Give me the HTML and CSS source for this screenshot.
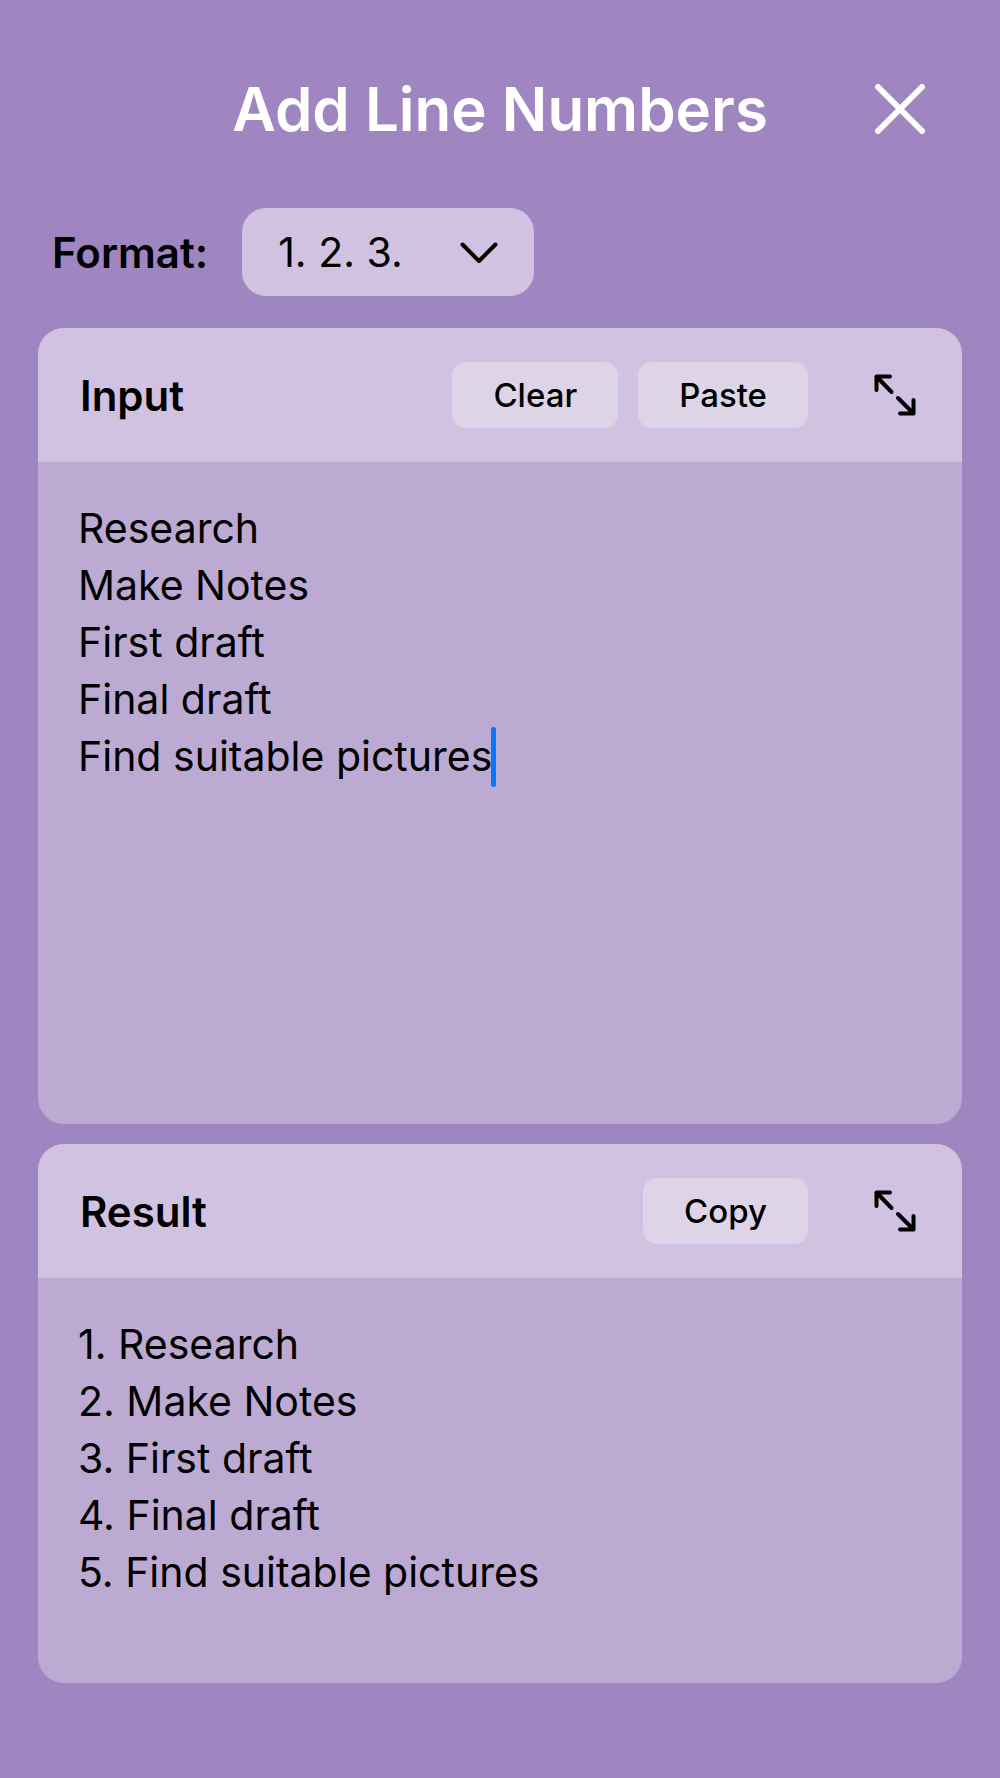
FILE: index.html
```html
<!DOCTYPE html>
<html lang="en">
<head>
<meta charset="utf-8">
<meta name="viewport" content="width=device-width, initial-scale=1">
<title>Add Line Numbers</title>
<link rel="stylesheet" href="styles.css">
</head>
<body>
<main class="page">
  <header class="topbar">
    <h1 class="title">Add Line Numbers</h1>
    <button class="icon-button" type="button" aria-label="Close">
      <svg class="close-icon" viewBox="0 0 52 52" aria-hidden="true"><path d="M4 4L48 48M48 4L4 48"/></svg>
    </button>
  </header>

  <div class="format">
    <label class="format-label" for="format">Format:</label>
    <div class="select-wrap">
      <select class="select" id="format">
        <option>1. 2. 3.</option>
      </select>
      <svg class="chevron" viewBox="0 0 38 22" aria-hidden="true"><path d="M2.500 2.500L19 19L35.500 2.500"/></svg>
    </div>
  </div>

  <section class="panel panel-input">
    <div class="panel-head">
      <h2 class="panel-title"><label for="input">Input</label></h2>
      <button class="button" type="button">Clear</button>
      <button class="button" type="button">Paste</button>
      <button class="icon-button" type="button" aria-label="Expand input">
        <svg class="expand-icon" viewBox="0 0 42 42" aria-hidden="true"><path d="M16 2.500H2.500V16M2.500 2.500L17.500 18M24 24L39.500 39.500M39.500 26V39.500H26"/></svg>
      </button>
    </div>
    <div class="editor">
      <textarea class="text" id="input" spellcheck="false">Research
Make Notes
First draft
Final draft
Find suitable pictures</textarea>
      <span class="caret"></span>
    </div>
  </section>

  <section class="panel panel-result">
    <div class="panel-head">
      <h2 class="panel-title"><label for="result">Result</label></h2>
      <button class="button" type="button">Copy</button>
      <button class="icon-button" type="button" aria-label="Expand result">
        <svg class="expand-icon" viewBox="0 0 42 42" aria-hidden="true"><path d="M16 2.500H2.500V16M2.500 2.500L17.500 18M24 24L39.500 39.500M39.500 26V39.500H26"/></svg>
      </button>
    </div>
    <div class="editor">
      <textarea class="text" id="result" rows="6" readonly spellcheck="false">1. Research
2. Make Notes
3. First draft
4. Final draft
5. Find suitable pictures</textarea>
    </div>
  </section>
</main>
</body>
</html>
```
FILE: styles.css
```css
* {
  box-sizing: border-box;
}

body {
  margin: 0;
  background: #9f86c0;
  color: #000;
  font-family: Inter, "Liberation Sans", sans-serif;
  font-size: 42px;
  line-height: 57px;
}

button,
select,
textarea {
  margin: 0;
  border: 0;
  color: inherit;
  font-family: inherit;
}

svg {
  display: block;
  fill: none;
  stroke: currentColor;
  stroke-width: 4;
  stroke-linecap: round;
  stroke-linejoin: round;
}

.page {
  display: flex;
  flex-direction: column;
  min-height: 100vh;
  padding: 69px 38px 95px;
}

.topbar {
  display: grid;
  grid-template-columns: 88px 1fr 88px;
  align-items: center;
  padding: 0 18px;
  color: #fff;
}

.title {
  grid-column: 2;
  margin: 0;
  font-size: 60px;
  font-weight: 600;
  line-height: 80px;
  text-align: center;
  white-space: nowrap;
}

.icon-button {
  display: flex;
  align-items: center;
  justify-content: center;
  width: 88px;
  height: 66px;
  padding: 0;
  background: none;
}

.close-icon {
  width: 52px;
  height: 52px;
  stroke-width: 6;
}

.expand-icon {
  width: 42px;
  height: 42px;
}

.format {
  display: flex;
  align-items: center;
  gap: 34px;
  margin: 59px 0 32px;
  padding-left: 14px;
}

.format-label,
.panel-title {
  font-weight: 600;
}

.select-wrap {
  position: relative;
}

.select {
  appearance: none;
  width: 292px;
  height: 88px;
  padding: 0 36px;
  border-radius: 24px;
  background: #d0c2e0;
  font-size: 41px;
}

.chevron {
  position: absolute;
  top: 34px;
  right: 36px;
  width: 38px;
  height: 22px;
  pointer-events: none;
}

.panel {
  display: flex;
  flex-direction: column;
  overflow: hidden;
  border-radius: 26px;
  background: #bcaad3;
}

.panel-input {
  flex: 1;
}

.panel-result {
  margin-top: 20px;
}

.panel-head {
  display: flex;
  align-items: center;
  gap: 20px;
  height: 134px;
  padding: 0 23px 0 42px;
  background: #d0c2e0;
}

.panel-head .icon-button {
  margin-left: 23px;
}

.panel-title {
  flex: 1;
  margin: 0;
  font-size: 42px;
}

.button {
  height: 66px;
  padding: 0 41px;
  border-radius: 14px;
  background: #ddd4e8;
  font-size: 33px;
  font-weight: 500;
}

.editor {
  position: relative;
  display: flex;
  flex: 1;
}

.text {
  flex: 1;
  min-width: 0;
  padding: 38px 40px 25px;
  outline: 0;
  background: none;
  resize: none;
  overflow: hidden;
  font-size: 41px;
  line-height: 57px;
}

.caret {
  position: absolute;
  top: 265px;
  left: 453px;
  width: 5px;
  height: 60px;
  border-radius: 3px;
  background: #007aff;
}
```
